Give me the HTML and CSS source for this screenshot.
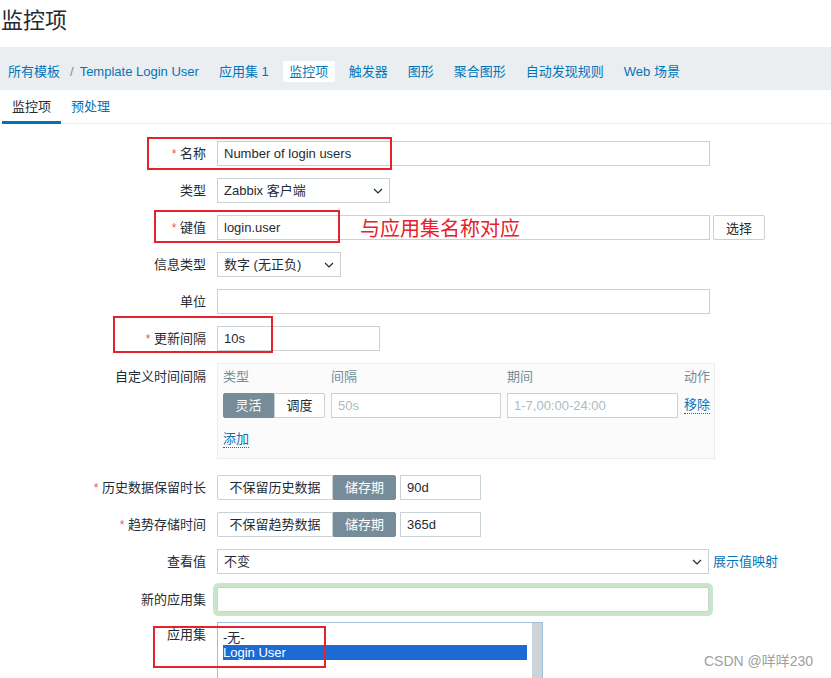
FILE: index.html
```html
<!DOCTYPE html>
<html>
<head>
<meta charset="utf-8">
<title>监控项</title>
<link rel="stylesheet" href="styles.css">
</head>
<body>
<div class="header">
	<h1>监控项</h1>
</div>
<div class="nav">
	<a class="nav-item first">所有模板</a>
	<span class="sep">/</span>
	<a class="nav-item">Template Login User</a>
	<a class="nav-item">应用集 1</a>
	<span class="nav-item active">监控项</span>
	<a class="nav-item">触发器</a>
	<a class="nav-item">图形</a>
	<a class="nav-item">聚合图形</a>
	<a class="nav-item">自动发现规则</a>
	<a class="nav-item">Web 场景</a>
</div>
<div class="tabs">
	<span class="tab active">监控项</span>
	<a class="tab">预处理</a>
</div>

<div class="form">
	<div class="row">
		<label class="lbl"><span class="req">*</span> 名称</label>
		<div class="input wide">Number of login users</div>
	</div>
	<div class="row">
		<label class="lbl">类型</label>
		<div class="select w-type">Zabbix 客户端<svg class="arrow" width="10" height="6" viewBox="0 0 10 6"><polyline points="1,1 5,5 9,1" fill="none" stroke="#1f2c33" stroke-width="1.2"/></svg></div>
	</div>
	<div class="row">
		<label class="lbl"><span class="req">*</span> 键值</label>
		<div class="input wide">login.user</div>
		<button class="btn">选择</button>
	</div>
	<div class="row">
		<label class="lbl">信息类型</label>
		<div class="select w-info">数字 (无正负)<svg class="arrow" width="10" height="6" viewBox="0 0 10 6"><polyline points="1,1 5,5 9,1" fill="none" stroke="#1f2c33" stroke-width="1.2"/></svg></div>
	</div>
	<div class="row">
		<label class="lbl">单位</label>
		<div class="input wide"></div>
	</div>
	<div class="row">
		<label class="lbl"><span class="req">*</span> 更新间隔</label>
		<div class="input w-delay">10s</div>
	</div>
	<div class="row row-custom">
		<label class="lbl lbl-top">自定义时间间隔</label>
		<div class="custom">
			<div class="custom-grid">
				<span class="th">类型</span>
				<span class="th">间隔</span>
				<span class="th">期间</span>
				<span class="th right">动作</span>
				<div class="seg">
					<span class="seg-btn on">灵活</span>
					<span class="seg-btn">调度</span>
				</div>
				<div class="input ph">50s</div>
				<div class="input ph">1-7,00:00-24:00</div>
				<a class="link">移除</a>
			</div>
			<a class="link add">添加</a>
		</div>
	</div>
	<div class="row">
		<label class="lbl"><span class="req">*</span> 历史数据保留时长</label>
		<div class="seg seg-keep">
			<span class="seg-btn">不保留历史数据</span>
			<span class="seg-btn on">储存期</span>
		</div>
		<div class="input w-period">90d</div>
	</div>
	<div class="row">
		<label class="lbl"><span class="req">*</span> 趋势存储时间</label>
		<div class="seg seg-keep">
			<span class="seg-btn">不保留趋势数据</span>
			<span class="seg-btn on">储存期</span>
		</div>
		<div class="input w-period">365d</div>
	</div>
	<div class="row">
		<label class="lbl">查看值</label>
		<div class="select w-value">不变<svg class="arrow" width="10" height="6" viewBox="0 0 10 6"><polyline points="1,1 5,5 9,1" fill="none" stroke="#1f2c33" stroke-width="1.2"/></svg></div>
		<a class="link value-map">展示值映射</a>
	</div>
	<div class="row row-new">
		<label class="lbl">新的应用集</label>
		<div class="input wide focus"></div>
	</div>
	<div class="row">
		<label class="lbl">应用集</label>
		<div class="listbox">
			<div class="list-items">
				<div class="opt">-无-</div>
				<div class="opt selected">Login User</div>
			</div>
			<div class="scroll"></div>
		</div>
	</div>
</div>

<div class="mark mark-name"></div>
<div class="mark mark-key"></div>
<div class="mark mark-delay"></div>
<div class="mark mark-apps"></div>
<div class="note">与应用集名称对应</div>
<div class="watermark">CSDN @咩咩230</div>
</body>
</html>
```
FILE: styles.css
```css
body{
	margin: 0;
	position: relative;
	height: 678px;
	overflow: hidden;
	background: #fff;
	color: #1f2c33;
	font-family: "Liberation Sans", Arial, "Noto Sans CJK SC", sans-serif;
	font-size: 13px;
}
a{
	color: #0275b8;
	text-decoration: none;
}
.header{
	height: 47px;
}
.header h1{
	margin: 0;
	padding-left: 1px;
	font-size: 22px;
	font-weight: normal;
	line-height: 42px;
	color: #1f2c33;
}
.nav{
	display: flex;
	align-items: center;
	box-sizing: border-box;
	height: 43px;
	padding: 5px 0 0 2px;
	background-color: #ebeef0;
}
.nav-item{
	padding: 0 6px;
	margin-right: 8px;
	line-height: 21px;
	border-radius: 2px;
}
.nav-item.first{
	margin-right: 0;
}
.nav-item.active{
	background-color: #fff;
	color: #0275b8;
	padding: 0 6.5px;
}
.sep{
	margin-left: 4px;
	color: #768d99;
}
.tabs{
	display: flex;
	height: 33px;
	padding-left: 2px;
	border-bottom: 1px solid #ebeef0;
}
.tab{
	padding: 0 10px;
	line-height: 34px;
}
.tab.active{
	color: #1f2c33;
	border-bottom: 3px solid #0275b8;
	height: 31px;
	margin-bottom: -1px;
}
.form{
	padding-top: 17px;
}
.row{
	display: flex;
	align-items: flex-start;
	margin-bottom: 12px;
}
.lbl{
	flex: none;
	width: 206px;
	height: 25px;
	margin-right: 11px;
	text-align: right;
	line-height: 25px;
	white-space: nowrap;
}
.lbl-top{
	padding-top: 1px;
}
.req{
	color: #e45959;
	font-size: 12px;
	line-height: 1;
}
.input,.select{
	box-sizing: border-box;
	height: 25px;
	padding: 0 6px;
	line-height: 23px;
	border: 1px solid #c8d1d6;
	background: #fff;
	white-space: nowrap;
	overflow: hidden;
}
.select{
	position: relative;
	padding-right: 20px;
}
.select .arrow{
	position: absolute;
	right: 6px;
	top: 9px;
}
.wide{
	width: 493px;
}
.w-type{
	width: 173px;
}
.w-info{
	width: 124px;
}
.w-delay{
	width: 163px;
}
.w-period{
	width: 81px;
	margin-left: 4px;
}
.w-value{
	width: 492px;
}
.btn{
	box-sizing: border-box;
	height: 25px;
	width: 52px;
	margin-left: 3px;
	padding: 0;
	border: 1px solid #c8d1d6;
	border-radius: 2px;
	background: #fff;
	color: #1f2c33;
	font-family: inherit;
	font-size: 13px;
}
.row-custom{
	margin-bottom: 16px;
}
.custom{
	box-sizing: border-box;
	width: 498px;
	height: 96px;
	padding: 5px 6px 0 5px;
	border: 1px solid #ebeef0;
	background-color: #fbfbfb;
}
.custom-grid{
	display: grid;
	grid-template-columns: 102px 170px 171px 1fr;
	column-gap: 6px;
	row-gap: 8px;
	align-items: center;
}
.th{
	color: #768d99;
	line-height: 16px;
	white-space: nowrap;
}
.th.right{
	text-align: right;
}
.ph{
	color: #acbbc2;
}
.seg{
	display: flex;
	height: 25px;
}
.seg-btn{
	box-sizing: border-box;
	flex: 1;
	height: 25px;
	line-height: 23px;
	text-align: center;
	border: 1px solid #c8d1d6;
	background: #fff;
	color: #1f2c33;
	white-space: nowrap;
}
.seg-btn.on{
	background-color: #768d99;
	border-color: #768d99;
	color: #fff;
}
.seg-btn:first-child{
	border-radius: 2px 0 0 2px;
}
.seg-btn:last-child{
	border-radius: 0 2px 2px 0;
}
.seg-keep{
	width: 179px;
}
.seg-keep .seg-btn:first-child{
	flex: none;
	width: 116px;
}
.link{
	color: #0275b8;
	border-bottom: 1px dotted #0275b8;
	line-height: 16px;
	white-space: nowrap;
	justify-self: start;
}
.add{
	display: inline-block;
	margin-top: 13px;
}
.value-map{
	border-bottom: none;
	margin-left: 4px;
	line-height: 25px;
}
.row-new{
	margin-top: 13px;
	margin-bottom: 10px;
}
.focus{
	width: 492px;
	border-radius: 2px;
	box-shadow: 0 0 0 4px #c9e5ca;
}
.listbox{
	box-sizing: border-box;
	display: flex;
	width: 326px;
	height: 90px;
	border: 1px solid #9fbfdc;
	background: #fff;
}
.list-items{
	flex: 1;
	padding: 7px 5px 0 5px;
}
.opt{
	line-height: 15px;
	height: 15px;
}
.opt.selected{
	background-color: #1c6ad4;
	color: #fff;
}
.scroll{
	width: 10px;
	background-color: #cdd4d8;
}
.mark{
	position: absolute;
	box-sizing: border-box;
	border: 2px solid #e5222b;
}
.mark-name{
	left: 147px;
	top: 137px;
	width: 245px;
	height: 33px;
}
.mark-key{
	left: 154px;
	top: 210px;
	width: 186px;
	height: 33px;
}
.mark-delay{
	left: 113px;
	top: 316px;
	width: 160px;
	height: 37px;
}
.mark-apps{
	left: 153px;
	top: 626px;
	width: 173px;
	height: 42px;
}
.note{
	position: absolute;
	left: 360px;
	top: 214px;
	color: #e5222b;
	font-family: "Noto Sans CJK SC", sans-serif;
	font-size: 20px;
	line-height: 28px;
}
.watermark{
	position: absolute;
	left: 704px;
	top: 650px;
	color: #a0a0a0;
	font-size: 14px;
	font-family: "Liberation Sans", "Noto Sans CJK SC", sans-serif;
}
```
